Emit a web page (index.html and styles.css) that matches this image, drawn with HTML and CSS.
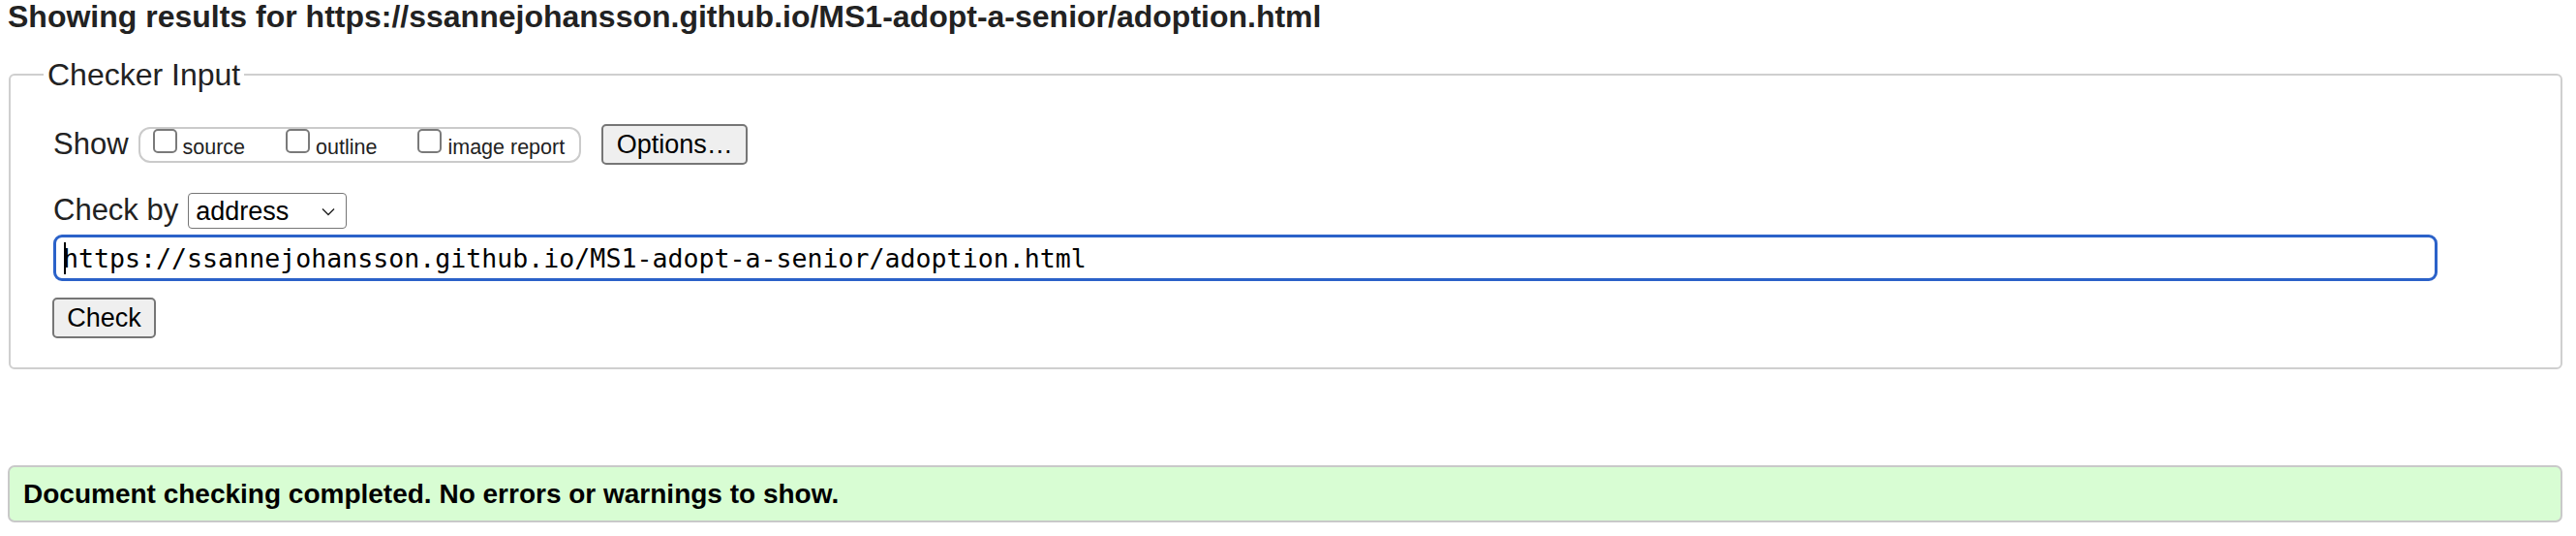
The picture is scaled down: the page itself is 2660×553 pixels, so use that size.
FILE: index.html
```html
<!DOCTYPE html>
<html lang="en">
<head>
<meta charset="utf-8">
<title>Nu Html Checker</title>
<link rel="stylesheet" href="styles.css">
</head>
<body>
<h2 class="results-title">Showing results for https://ssannejohansson.github.io/MS1-adopt-a-senior/adoption.html</h2>
<form class="checker-form">
  <fieldset class="checker">
    <legend class="checker-legend">Checker Input</legend>
    <div class="row row-show">
      <span class="row-label">Show</span>
      <div class="show-group">
        <label class="opt"><input type="checkbox" class="cb"><span>source</span></label><label class="opt"><input type="checkbox" class="cb"><span>outline</span></label><label class="opt"><input type="checkbox" class="cb"><span>image report</span></label>
      </div>
      <button type="button" class="btn btn-options">Options…</button>
    </div>
    <div class="row row-by">
      <label class="row-label by-label">Check by</label>
      <div class="select-wrap">
        <select class="select"><option>address</option></select>
        <svg class="chev" width="14" height="9" viewBox="0 0 14 9"><path d="M1 1.5 L7 7.5 L13 1.5" fill="none" stroke="#222" stroke-width="1.4"/></svg>
      </div>
    </div>
    <div class="url-wrap">
      <input class="url" type="text" value="https://ssannejohansson.github.io/MS1-adopt-a-senior/adoption.html">
      <span class="caret"></span>
    </div>
    <button type="button" class="btn btn-check">Check</button>
  </fieldset>
</form>
<div class="status">Document checking completed. No errors or warnings to show.</div>
</body>
</html>
```
FILE: styles.css
```css
html, body {
  background: #fff;
}
body {
  margin: 0;
  padding: 0 14px 0 8px;
  font-family: "Liberation Sans", Arial, sans-serif;
  color: #222;
}
.results-title {
  margin: 0;
  font-size: 32px;
  line-height: 34px;
  font-weight: bold;
  color: #222;
}
.checker-form {
  margin: 25px 0 0 1px;
}
.checker {
  margin: 0;
  border: 2px solid #cfcfcf;
  border-radius: 6px;
  padding: 33px 0 30px 44px;
  min-width: 0;
}
.checker-legend {
  font-size: 32px;
  line-height: 36px;
  padding: 0 4px;
  margin-left: -10px;
  color: #222;
}
.row {
  display: flex;
}
.row-show {
  align-items: center;
}
.row-label {
  font-size: 31px;
  line-height: 34px;
  color: #222;
}
.row-show .row-label {
  margin-right: 10px;
}
.show-group {
  box-sizing: border-box;
  height: 37px;
  border: 2px solid #cbcbcb;
  border-radius: 12px;
  padding: 0 15px 0 13px;
  font-size: 21.5px;
  white-space: nowrap;
  color: #222;
}
.opt {
  display: inline-block;
  margin-left: 42px;
}
.opt:first-child {
  margin-left: 0;
}
.cb {
  -webkit-appearance: none;
  appearance: none;
  box-sizing: border-box;
  width: 25px;
  height: 25px;
  margin: 0 6px 1px 0;
  border: 2px solid #7a7a7a;
  border-radius: 5px;
  background: #fff;
  vertical-align: baseline;
}
.btn {
  box-sizing: border-box;
  height: 42px;
  font-family: "Liberation Sans", Arial, sans-serif;
  font-size: 27px;
  line-height: 30px;
  color: #000;
  background: #efefef;
  border: 2px solid #767676;
  border-radius: 5px;
  padding: 4px 12px;
}
.btn-options {
  margin-left: 21px;
  width: 151px;
  padding: 4px 0;
}
.row-by {
  margin-top: 29px;
  align-items: baseline;
}
.by-label {
  margin-right: 10px;
}
.select-wrap {
  position: relative;
}
.select {
  -webkit-appearance: none;
  appearance: none;
  box-sizing: border-box;
  width: 164px;
  height: 37px;
  font-family: "Liberation Sans", Arial, sans-serif;
  font-size: 27px;
  color: #000;
  background: #fff;
  border: 1.5px solid #767676;
  border-radius: 4px;
  padding: 0 0 0 7px;
}
.chev {
  position: absolute;
  right: 12px;
  top: 15px;
}
.url-wrap {
  position: relative;
  margin-top: 6px;
  width: 2462px;
}
.url {
  box-sizing: border-box;
  display: block;
  width: 2462px;
  height: 48px;
  border: 3px solid #2b62c9;
  border-radius: 9px;
  padding: 0 0 0 7px;
  font-family: "DejaVu Sans Mono", "Liberation Mono", monospace;
  font-size: 26.6px;
  color: #000;
  background: #fff;
  outline: none;
}
.caret {
  position: absolute;
  left: 11px;
  top: 8px;
  width: 2px;
  height: 33px;
  background: #000;
}
.btn-check {
  display: block;
  margin-top: 17px;
  margin-left: -1px;
  width: 107px;
}
.status {
  margin: 99px 0 0 0;
  box-sizing: border-box;
  height: 59px;
  border: 2px solid #c9c9c9;
  border-radius: 7px;
  background: #d8fdd3;
  padding: 0 14px;
  display: flex;
  align-items: center;
  font-size: 28px;
  font-weight: bold;
  color: #000;
}
```
